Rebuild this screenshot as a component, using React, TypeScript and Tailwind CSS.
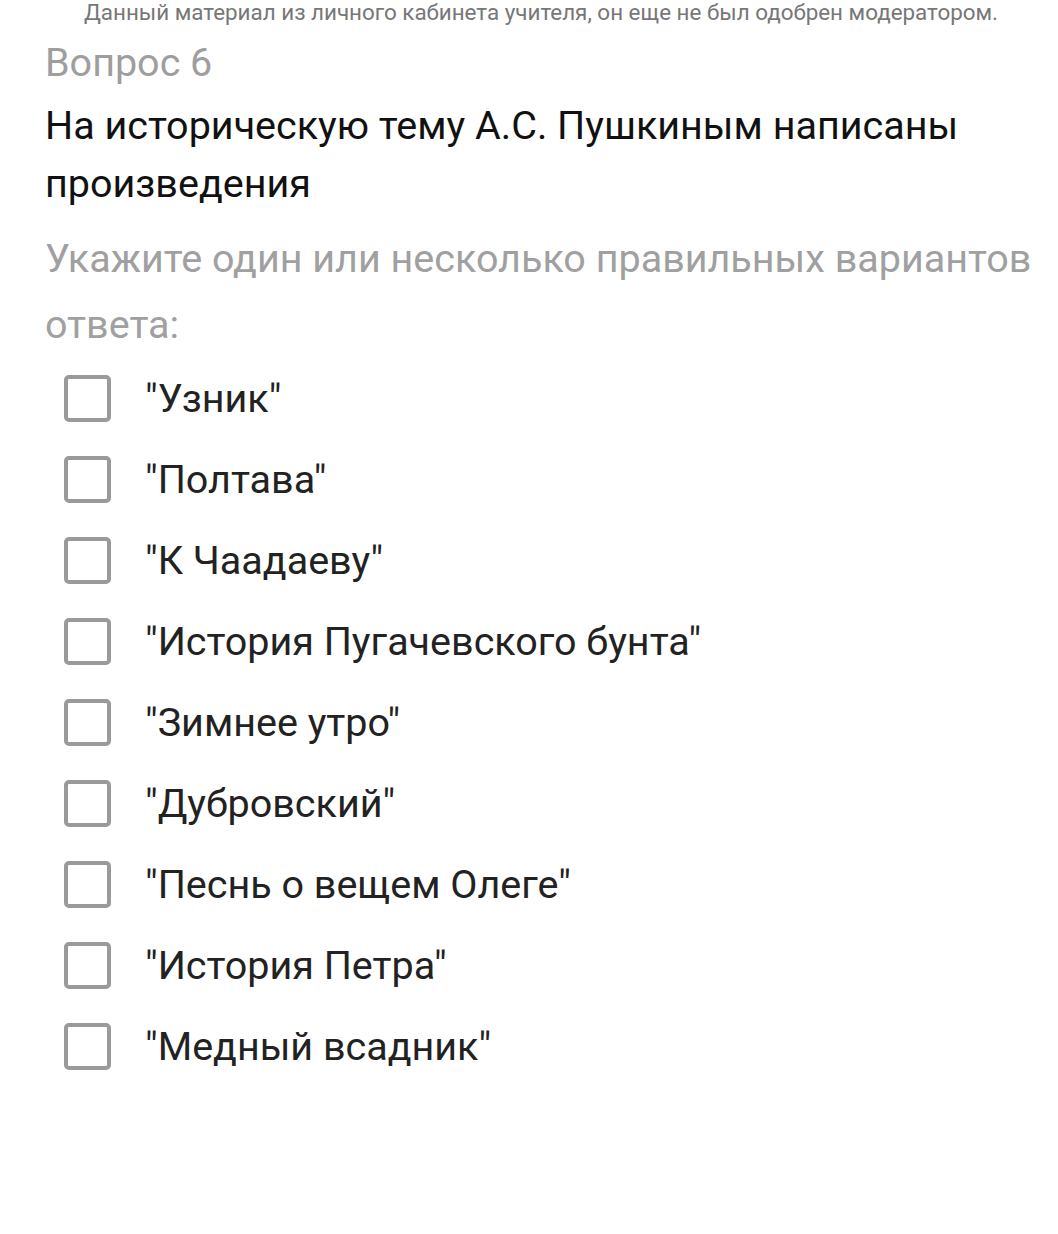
const options = [
  '"Узник"',
  '"Полтава"',
  '"К Чаадаеву"',
  '"История Пугачевского бунта"',
  '"Зимнее утро"',
  '"Дубровский"',
  '"Песнь о вещем Олеге"',
  '"История Петра"',
  '"Медный всадник"',
];

export default function App() {
  return (
    <div className="min-h-[1234px] w-[1058px] bg-white font-['Roboto',sans-serif]">
      <p className="pl-[24px] text-center text-[22.4px] leading-[24px] text-[#777]">
        Данный материал из личного кабинета учителя, он еще не был одобрен модератором.
      </p>
      <div className="pl-[45px] pr-[20px]">
        <h2 className="mt-[14px] text-[39.5px] leading-[50px] text-[#9e9e9e]">Вопрос 6</h2>
        <h1 className="mt-[9px] text-[39.5px] leading-[58px] text-[#111]">
          На историческую тему А.С. Пушкиным написаны произведения
        </h1>
        <p className="mt-[13px] text-[39.5px] leading-[66px] text-[#a0a0a0]">
          Укажите один или несколько правильных вариантов ответа:
        </p>
        <ul className="mt-[17px] flex flex-col gap-[34px] pl-[19px]">
          {options.map((o) => (
            <li key={o} className="flex h-[47px] items-center gap-[34px]">
              <span className="h-[47px] w-[47px] shrink-0 rounded-[5px] border-[4px] border-[#9a9a9a]" />
              <span className="text-[39.5px] leading-[47px] text-[#222]">{o}</span>
            </li>
          ))}
        </ul>
      </div>
    </div>
  );
}
